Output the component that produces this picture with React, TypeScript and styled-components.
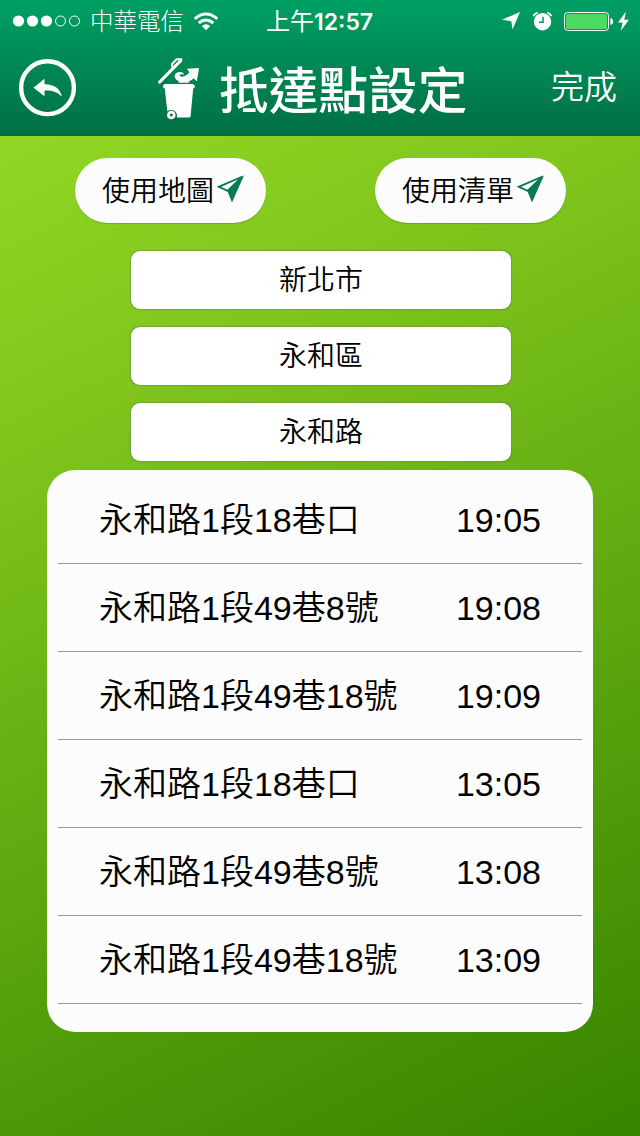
import React from "react";
import styled, { createGlobalStyle } from "styled-components";

const Global = createGlobalStyle`
  * { box-sizing: border-box; }
  body { margin: 0; font-family: "Liberation Sans", "Noto Sans CJK TC", sans-serif; font-weight: 350; }
  svg { display: block; flex: none; }
`;

const Screen = styled.div`
  width: 640px;
  height: 1136px;
  overflow: hidden;
  background: linear-gradient(154deg, #90d724 9%, #81c71d 29%, #388500 98%);
`;
const Header = styled.header`
  height: 136px;
  color: #fff;
  background: linear-gradient(#00a063, #006e44);
`;
const StatusBar = styled.div`
  height: 40px;
  padding: 0 11px 0 12px;
  display: grid;
  grid-template-columns: 254px 1fr 127px;
  align-items: center;
  font-size: 23.5px;
  font-weight: 300;
  line-height: 40px;
`;
const Group = styled.div<{ $gap: number }>`
  display: flex;
  align-items: center;
  gap: ${(p) => p.$gap}px;
`;
const Carrier = styled.span`
  padding-top: 2px;
`;
const Clock = styled.div`
  padding-top: 2px;
  font-size: 24px;
  font-weight: 400;
  white-space: nowrap;
  b { font-size: 23px; font-family: Inter, "Liberation Sans", sans-serif; font-weight: 600; }
`;
const NavBar = styled.div`
  height: 96px;
  padding: 0 23px 0 18px;
  display: flex;
  align-items: center;
`;
const BackButton = styled.button`
  width: 58px;
  height: 58px;
  padding: 0;
  border: 0;
  background: none;
`;
const Title = styled.h1`
  margin: 0 auto 0 81px;
  display: flex;
  align-items: center;
  gap: 18px;
  font-size: 49.7px;
  line-height: 88px;
  font-weight: 500;
  span { padding-top: 8px; }
`;
const Done = styled.span`
  font-size: 33px;
  line-height: 88px;
`;
const Actions = styled.div`
  display: flex;
  justify-content: space-between;
  padding: 22px 74px 0 75px;
`;
const Pill = styled.button`
  width: 191px;
  height: 65px;
  padding: 0 0 3px 27px;
  border: 0;
  border-radius: 33px;
  background: #fcfcfc;
  box-shadow: 0 1px 1px rgba(40, 90, 0, 0.3);
  display: flex;
  align-items: center;
  gap: 3px;
  color: #000;
  font: inherit;
  font-size: 28px;
`;
const Fields = styled.div`
  padding: 28px 129px 9px 131px;
  display: grid;
  gap: 18px;
`;
const Field = styled.div`
  height: 58px;
  border-radius: 9px;
  background: #fff;
  box-shadow: 0 0 1px 0.5px rgba(110, 130, 90, 0.5);
  text-align: center;
  font-size: 28px;
  line-height: 59px;
`;
const List = styled.div`
  width: 546px;
  height: 562px;
  margin-left: 47px;
  padding: 6px 11px;
  border-radius: 28px;
  background: #fcfcfc;
`;
const Row = styled.div`
  height: 88px;
  padding: 0 41px 0 41px;
  border-bottom: 1px solid #979797;
  display: flex;
  justify-content: space-between;
  font-size: 34px;
  line-height: 88px;
  white-space: nowrap;
`;

const Signal = () => (
  <svg width="69" height="12" viewBox="0 0 69 12">
    {[0, 1, 2].map((i) => <circle key={i} cx={6.5 + i * 14} cy="6" r="5.6" fill="#fff" />)}
    {[3, 4].map((i) => <circle key={i} cx={6.5 + i * 14} cy="6" r="5" fill="none" stroke="#fff" />)}
  </svg>
);
const Wifi = () => (
  <svg width="26" height="19" viewBox="0 0 26 19" fill="none" stroke="#fff" strokeWidth="3">
    <path d="M1.7 6.8Q13-2.8 24.3 6.8" />
    <path d="M5.7 11Q13 5 20.3 11" />
    <path d="M8.8 14Q13 10.4 17.2 14L13 18.3Z" fill="#fff" stroke="none" />
  </svg>
);
const Location = () => (
  <svg width="18" height="18" viewBox="0 0 18 18">
    <path d="M18 0L10.5 17.5L9.3 9.2L0 7.8Z" fill="#fff" />
  </svg>
);
const Alarm = () => (
  <svg width="20" height="19" viewBox="0 0 20 19">
    <circle cx="10.5" cy="9.7" r="8.7" fill="#fff" />
    <path d="M1.3 4.2Q2.5 1.4 5.7.7M19.4 4.2Q18.2 1.4 15.2.7" fill="none" stroke="#fff" strokeWidth="1.8" />
    <path d="M11 4.7V10.2H7" fill="none" stroke="#009259" strokeWidth="1.5" />
  </svg>
);
const Battery = () => (
  <svg width="65" height="20" viewBox="0 0 65 20">
    <rect x=".5" y="1.5" width="44" height="18" rx="3" fill="none" stroke="#fff" />
    <rect x="2" y="3" width="41" height="15" rx="1.5" fill="#4cda64" />
    <path d="M46.3 7Q49.1 7.5 49.1 10.5T46.3 14Z" fill="#fff" />
    <path d="M62 .5L54 11.4H58.6L56.8 19.8L65 8.7H60.3Z" fill="#fff" />
  </svg>
);
const Back = () => (
  <svg width="58" height="58" viewBox="0 0 58 58">
    <circle cx="29.5" cy="28.7" r="26.4" fill="none" stroke="#fff" strokeWidth="4.4" />
    <path d="M15.5 28.7L26.5 19.7V25.2C36 25.2 42 29.2 44 37.7C39 32.7 34 31.2 26.5 31.5V37.2Z" fill="#fff" />
  </svg>
);
const Bin = () => (
  <svg width="44" height="64" viewBox="0 0 44 64">
    <path d="M2.7 26L23.7 4.6" stroke="#fff" strokeWidth="3.2" strokeLinecap="round" />
    <path d="M15.3 11.8L15 8L19.5 3.3H25.2" fill="none" stroke="#fff" strokeWidth="1.9" />
    <path d="M30 12.7L42 12L39.9 25.3L36.5 22.3C34.5 24.6 32.8 25.1 31.2 25.3L33 26.8H21L22.3 25.3C16.3 24 16 16.3 22.3 16C25 15.8 26.8 17 27.2 18.7C24 17.6 21.7 18.5 23.2 20.3C26 21.8 30.5 19.3 32.3 16.3Z" fill="#fff" />
    <path d="M6 30Q6 28 8.5 28H34.8Q37.8 28 37.8 30.5Q37.8 32.5 36.2 32.5L33.6 60Q33.5 61.5 31.8 61.5H19.8C21 57.5 17.8 54 14.3 54C12.5 54 11.3 54.5 10.3 55.3L7.8 32.5Q6 32.5 6 30Z" fill="#fff" />
    <circle cx="14.3" cy="59" r="2.9" fill="none" stroke="#fff" strokeWidth="2.8" />
  </svg>
);
const Plane = () => (
  <svg width="28" height="28" viewBox="0 0 28 28">
    <path d="M25.5 1.5L1.8 11.8L10.8 15.8Z" fill="none" stroke="#087c50" strokeWidth="1.9" />
    <path d="M27.2 0L15 27.5L10.5 16.5Z" fill="#087c50" />
  </svg>
);

const stops = [
  ["永和路1段18巷口", "19:05"],
  ["永和路1段49巷8號", "19:08"],
  ["永和路1段49巷18號", "19:09"],
  ["永和路1段18巷口", "13:05"],
  ["永和路1段49巷8號", "13:08"],
  ["永和路1段49巷18號", "13:09"],
];

export default function App() {
  return (
    <Screen>
      <Global />
      <Header>
        <StatusBar>
          <Group $gap={9}><Signal /><Carrier>中華電信</Carrier><Wifi /></Group>
          <Clock>上午<b>12:57</b></Clock>
          <Group $gap={12}><Location /><Alarm /><Battery /></Group>
        </StatusBar>
        <NavBar>
          <BackButton aria-label="返回"><Back /></BackButton>
          <Title><Bin /><span>抵達點設定</span></Title>
          <Done>完成</Done>
        </NavBar>
      </Header>
      <Actions>
        <Pill>使用地圖<Plane /></Pill>
        <Pill>使用清單<Plane /></Pill>
      </Actions>
      <Fields>
        {["新北市", "永和區", "永和路"].map((t) => <Field key={t}>{t}</Field>)}
      </Fields>
      <List>
        {stops.map(([place, time]) => (
          <Row key={place + time}><span>{place}</span><span>{time}</span></Row>
        ))}
      </List>
    </Screen>
  );
}
